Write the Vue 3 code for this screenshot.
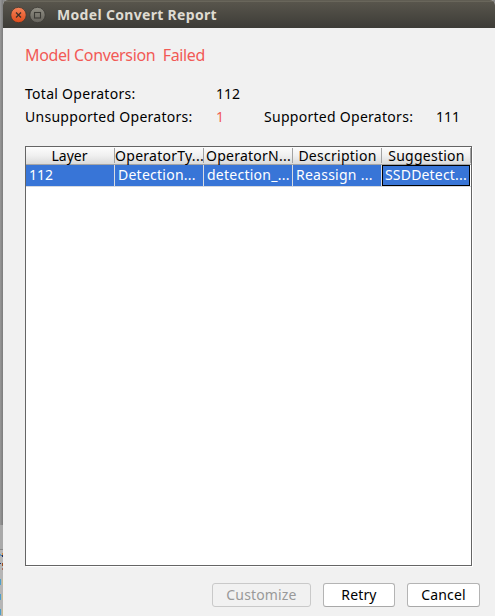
<script setup>
const columns = [
  { title: 'Layer', value: '112', key: 'layer' },
  { title: 'OperatorTy...', value: 'Detection...', key: 'type' },
  { title: 'OperatorN...', value: 'detection_...', key: 'name' },
  { title: 'Description', value: 'Reassign ...', key: 'desc' },
  { title: 'Suggestion', value: 'SSDDetect...', key: 'sugg' },
]
</script>

<template>
  <div class="desktop">
    <div class="behind">
      <div class="shade"></div>
      <div class="panel"></div>
      <svg class="editor" width="3" height="66" viewBox="0 0 3 66" shape-rendering="crispEdges">
        <rect width="3" height="66" fill="#b6b6b6" />
        <path d="M0 4h1v2H0z" fill="#5b9dcb" />
        <path d="M1 5h1v1H1z" fill="#6f6f6f" />
        <path d="M2 3h1v2H2z" fill="#d08a3c" />
        <path d="M2 5h1v2H2zM0 13h1v1H0z" fill="#1d2d66" />
        <path d="M2 13h1v3H2z" fill="#9a4a1c" />
        <path d="M2 18h1v2H2z" fill="#a9705c" />
        <path d="M0 29h1v6H0zM0 44h1v6H0zM0 59h1v6H0z" fill="#4f9fc9" />
        <path d="M2 29h1v6H2zM2 44h1v6H2zM2 59h1v6H2z" fill="#c9bd92" />
      </svg>
    </div>
    <div class="window">
      <header class="titlebar">
        <svg class="controls" width="46" height="18" viewBox="0 0 46 18">
          <defs>
            <linearGradient id="close" x1="0" y1="0" x2="0" y2="1">
              <stop offset="0" stop-color="#f58359" />
              <stop offset="1" stop-color="#df4b1b" />
            </linearGradient>
            <linearGradient id="max" x1="0" y1="0" x2="0" y2="1">
              <stop offset="0" stop-color="#918f85" />
              <stop offset="1" stop-color="#65635c" />
            </linearGradient>
          </defs>
          <circle cx="9.5" cy="9" r="7.7" fill="url(#close)" stroke="#3d3831" stroke-width=".8" />
          <path d="M7 6.5l5 5M12 6.5l-5 5" stroke="#3d3029" stroke-width="1.3" />
          <circle cx="28.5" cy="9" r="7.7" fill="url(#max)" stroke="#3b3a35" stroke-width=".8" />
          <rect x="25.5" y="6.5" width="6" height="5.5" fill="none" stroke="#3b3a35" stroke-width="1.1" />
        </svg>
        <span class="title">Model Convert Report</span>
      </header>
      <main class="content">
        <div class="status">Model Conversion&nbsp; Failed</div>
        <div class="stats">
          <span>Total Operators:</span><span class="num">112</span><span></span><span></span>
          <span>Unsupported Operators:</span><span class="bad">1</span><span>Supported Operators:</span><span class="num">111</span>
        </div>
        <div class="table">
          <div class="head">
            <div v-for="c in columns" :key="c.key" class="th" :class="c.key"><span>{{ c.title }}</span></div>
          </div>
          <div class="row">
            <div v-for="c in columns" :key="c.key" class="td" :class="c.key"><span>{{ c.value }}</span></div>
          </div>
        </div>
        <div class="actions">
          <button class="customize" disabled>Customize</button>
          <button class="retry">Retry</button>
          <button class="cancel">Cancel</button>
        </div>
      </main>
    </div>
  </div>
</template>

<style>
body { overflow: hidden; }
</style>

<style scoped>
.desktop {
  display: flex;
  width: 495px;
  height: 616px;
  background: #8b8b8b;
  font-family: "Noto Sans", sans-serif;
  font-size: 14px;
  color: #000;
}
.behind { width: 3px; flex: none; display: flex; flex-direction: column; }
.shade { flex: none; height: 525px; background: linear-gradient(90deg, #999, #7c7c7c); }
.panel { flex: none; height: 25px; background: #a9a9a9; border-bottom: 1px solid #888; box-sizing: border-box; }
.editor { display: block; flex: none; }
.window {
  flex: 1;
  display: flex;
  flex-direction: column;
  background: #f1f1f1;
  border-radius: 5px 5px 0 0;
  overflow: hidden;
}
.titlebar {
  height: 28px;
  box-sizing: border-box;
  border-top: 1px solid #605d53;
  display: flex;
  align-items: center;
  padding-left: 6px;
  background: linear-gradient(#59564d, #3d3c37);
  box-shadow: inset 0 1px #69665b;
}
.controls { flex: none; }
.title {
  margin-left: 2px;
  font-weight: 700;
  font-size: 14px;
  letter-spacing: 0.32px;
  line-height: 20px;
  color: #dfdbd2;
  white-space: nowrap;
}
.content { flex: 1; display: flex; flex-direction: column; padding: 16px 15px 0 22px; }
.status { height: 23px; line-height: 23px; font-size: 16px; letter-spacing: -0.37px; color: #f25a56; white-space: nowrap; }
.stats {
  margin-top: 15px;
  display: grid;
  grid-template-columns: 191px 48px 172px auto;
  grid-auto-rows: 23px;
  line-height: 23px;
  letter-spacing: 0.28px;
  white-space: nowrap;
}
.num { letter-spacing: 0; }
.bad { color: #f25a56; }
.table {
  margin-top: 18px;
  width: 447px;
  height: 420px;
  box-sizing: border-box;
  border: 1px solid #656565;
  background: #fff;
  box-shadow: 1px 1px #fff;
}
.head, .row { display: grid; grid-template-columns: repeat(5, 89px); white-space: nowrap; }
.head {
  height: 18px;
  box-sizing: border-box;
  background: linear-gradient(#fdfdfd, #f0f0f0 50%, #dadada);
  border-bottom: 1px solid #a5a5a5;
}
.th { position: relative; display: flex; justify-content: center; line-height: 18px; letter-spacing: 0.26px; }
.th::after { content: ""; position: absolute; right: 0; top: 1px; width: 1px; height: 15px; background: #a2a2a2; }
.th.layer { letter-spacing: 0; padding-right: 2px; }
.row { height: 22px; box-sizing: border-box; border-bottom: 1px solid #d5d9e0; background: linear-gradient(90deg, #3875d7 444px, #fff 444px); color: #fff; }
.td { height: 21px; line-height: 20px; box-sizing: border-box; border-right: 1px solid #d9dce2; padding-left: 3px; letter-spacing: 0.25px; }
.td.layer { letter-spacing: 0; }
.td.sugg { width: 88px; border: 1px solid #000; line-height: 18px; padding-left: 2px; letter-spacing: 0.18px; }
.actions { display: flex; margin: 17px 0 0 187px; }
button {
  box-sizing: border-box;
  height: 24px;
  padding: 0;
  border: 1px solid #b4b4b4;
  border-bottom-color: #a8a8a8;
  border-radius: 3px;
  background: #fff;
  color: #000;
  font: 14px/22px "Noto Sans", sans-serif;
  letter-spacing: 0.15px;
}
.customize { width: 99px; background: #f1f1f1; border-color: #c9c9c9; color: #999; }
.retry { width: 72px; margin-left: 12px; }
.cancel { width: 73px; margin-left: 12px; }
</style>
